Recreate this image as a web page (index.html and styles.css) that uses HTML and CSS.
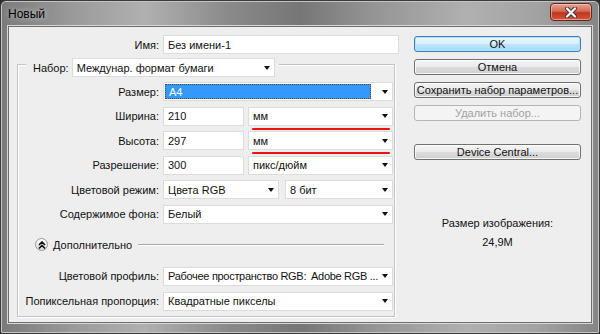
FILE: index.html
```html
<!DOCTYPE html>
<html lang="ru">
  <head>
    <meta charset="UTF-8" />
    <meta name="viewport" content="width=device-width, initial-scale=1.0" />
    <title>Новый</title>
    <link rel="stylesheet" href="styles.css">
  </head>
  <body>
    <main class="window">
      <header class="titlebar">
        <span class="title">Новый</span>
        <span class="close">
          <svg width="14" height="11" viewBox="0 0 14 11">
            <path d="M3 1.5 L11 9.5 M11 1.5 L3 9.5" stroke="#3a3a3a" stroke-width="4" stroke-linecap="round" />
            <path d="M3 1.5 L11 9.5 M11 1.5 L3 9.5" stroke="#fff" stroke-width="2.2" stroke-linecap="round" />
          </svg>
        </span>
      </header>

      <section class="client">
        <div class="form">
          <div class="row name-row">
            <span class="label outer">Имя:</span>
            <div class="field name">Без имени-1</div>
          </div>

          <div class="group">
            <div class="legend">
              <span class="legend-text">Набор:</span>
              <div class="select preset">Междунар. формат бумаги <i class="arrow"></i></div>
            </div>

            <div class="rows">
              <div class="row">
                <span class="label">Размер:</span>
                <div class="select full focus"><span class="hl">A4</span><i class="arrow"></i></div>
              </div>
              <div class="row">
                <span class="label">Ширина:</span>
                <div class="field num">210</div>
                <div class="select unit marked">мм <i class="arrow"></i></div>
              </div>
              <div class="row">
                <span class="label">Высота:</span>
                <div class="field num">297</div>
                <div class="select unit marked">мм <i class="arrow"></i></div>
              </div>
              <div class="row">
                <span class="label">Разрешение:</span>
                <div class="field num">300</div>
                <div class="select unit">пикс/дюйм <i class="arrow"></i></div>
              </div>
              <div class="row">
                <span class="label">Цветовой режим:</span>
                <div class="select mode">Цвета RGB <i class="arrow"></i></div>
                <div class="select bits">8 бит <i class="arrow"></i></div>
              </div>
              <div class="row">
                <span class="label">Содержимое фона:</span>
                <div class="select full">Белый <i class="arrow"></i></div>
              </div>
            </div>

            <div class="advanced">
              <span class="toggle">
                <svg width="8" height="8" viewBox="0 0 8 8">
                  <path d="M1 4 L4 1 L7 4 M1 7.5 L4 4.5 L7 7.5" fill="none" stroke="#111" stroke-width="1.6" />
                </svg>
              </span>
              <span class="advanced-text">Дополнительно</span>
              <span class="rule"></span>
            </div>

            <div class="rows">
              <div class="row">
                <span class="label">Цветовой профиль:</span>
                <div class="select full profile">Рабочее пространство RGB:&nbsp; Adobe RGB ... <i class="arrow"></i></div>
              </div>
              <div class="row">
                <span class="label">Попиксельная пропорция:</span>
                <div class="select full">Квадратные пикселы <i class="arrow"></i></div>
              </div>
            </div>
          </div>
        </div>

        <aside class="side">
          <button class="btn default">OK</button>
          <button class="btn">Отмена</button>
          <button class="btn">Сохранить набор параметров...</button>
          <button class="btn" disabled>Удалить набор...</button>
          <button class="btn central">Device Central...</button>
          <div class="size-info">
            <div>Размер изображения:</div>
            <div class="size-value">24,9M</div>
          </div>
        </aside>
      </section>
    </main>
  </body>
</html>
```

FILE: styles.css
```css
body {
  margin: 0;
  background-color: #2b2b2b;
  font-family: "Liberation Sans", Arial, sans-serif;
  font-size: 11px;
  color: #111;
}
.window {
  width: 600px;
  height: 334px;
  box-sizing: border-box;
  border: 1px solid #3a3a3a;
  border-radius: 6px 6px 2px 2px;
  background: linear-gradient(90deg, #7a7a7a 0%, #9a9a9a 12%, #b0b0b0 24%, #8a8a8a 38%, #767676 50%, #949494 62%, #b0b0b0 78%, #a2a2a2 90%, #858585 100%);
  box-shadow: inset 0 0 0 1px #c4c4c4;
  display: flex;
  flex-direction: column;
}
.titlebar {
  height: 25px;
  display: flex;
  justify-content: space-between;
  align-items: flex-start;
}
.title {
  margin: 6px 0 0 7px;
  font-size: 12px;
  color: #000;
  text-shadow: 0 0 6px rgba(255, 255, 255, 0.7);
}
.close {
  width: 40px;
  height: 16px;
  margin: 2px 7px 0 0;
  border: 1px solid #5a2a22;
  border-radius: 4px;
  background: linear-gradient(#e8a291 0%, #d46a52 45%, #c0351d 55%, #d6553a 100%);
  box-shadow: inset 0 0 0 1px rgba(255, 220, 210, 0.5);
  display: flex;
  justify-content: center;
  align-items: center;
}
.client {
  height: 297px;
  margin: 0 7px;
  box-sizing: border-box;
  border: 1px solid #6e6e6e;
  background-color: #eeeeee;
  box-shadow: 0 0 0 1px #d8d8d8;
  display: flex;
}
.form {
  width: 391px;
  padding-top: 8px;
}
.row {
  display: flex;
  align-items: center;
  height: 19px;
}
.label {
  width: 141px;
  margin-right: 4px;
  text-align: right;
  white-space: nowrap;
}
.label.outer {
  width: 150px;
}
.field,
.select {
  height: 19px;
  box-sizing: border-box;
  border: 1px solid #dcdcdc;
  background-color: #fff;
  display: flex;
  align-items: center;
  padding-left: 4px;
  white-space: nowrap;
  flex-shrink: 0;
}
.field.name {
  width: 236px;
}
.field.num {
  width: 81px;
  margin-right: 4px;
}
.select.full {
  width: 230px;
}
.select.profile {
  letter-spacing: -0.3px;
}
.select.unit {
  width: 145px;
  position: relative;
}
.select.mode {
  width: 116px;
  margin-right: 6px;
}
.select.bits {
  width: 108px;
}
.select.preset {
  width: 203px;
}
.arrow {
  margin-left: auto;
  margin-right: 4px;
  border-left: 3.5px solid transparent;
  border-right: 3.5px solid transparent;
  border-top: 4px solid #111;
}
.select.focus {
  padding: 1px;
}
.hl {
  flex: 1;
  align-self: stretch;
  margin-right: 11px;
  padding-left: 4px;
  background-color: #3399ff;
  outline: 1px dotted #5a4a2a;
  outline-offset: -1px;
  color: #fff;
  display: flex;
  align-items: center;
}
.hl + .arrow {
  margin-left: 0;
  margin-right: 3px;
}
.marked::after {
  content: "";
  position: absolute;
  left: 3px;
  right: 2px;
  bottom: -5px;
  height: 2px;
  border-radius: 1px;
  background-color: #f01010;
}
.group {
  width: 376px;
  height: 251px;
  margin: 10px 0 0 8px;
  border: 1px solid #c4c4c4;
  box-shadow: 1px 1px 0 #fff, inset 1px 1px 0 #fff;
}
.legend {
  display: flex;
  align-items: center;
  gap: 3px;
  width: max-content;
  height: 19px;
  margin: -7px 0 0 8px;
  padding: 0 4px 0 7px;
  background-color: #eeeeee;
}
.rows {
  display: flex;
  flex-direction: column;
  gap: 5.6px;
}
.legend + .rows {
  margin-top: 5px;
}
.advanced {
  display: flex;
  align-items: center;
  height: 16px;
  margin: 13px 10px 14px 17px;
}
.toggle {
  width: 11px;
  height: 11px;
  border: 1px solid #9a9a9a;
  border-radius: 50%;
  background: linear-gradient(#fdfdfd, #dedede);
  display: flex;
  justify-content: center;
  align-items: center;
}
.advanced-text {
  margin-left: 5px;
}
.rule {
  flex: 1;
  margin-left: 6px;
  border-top: 1px solid #a8a8a8;
  border-bottom: 1px solid #fff;
}
.side {
  width: 167px;
  margin-left: 14px;
  padding-top: 9px;
  display: flex;
  flex-direction: column;
}
.btn {
  height: 16px;
  margin-bottom: 7px;
  padding: 0;
  border: 1px solid #707070;
  border-radius: 3px;
  background: linear-gradient(#f4f4f4 0%, #ebebeb 48%, #dddddd 52%, #cfcfcf 100%);
  box-shadow: inset 0 0 0 1px rgba(255, 255, 255, 0.8);
  font-family: inherit;
  font-size: 11px;
  color: #111;
  line-height: 13px;
  white-space: nowrap;
}
.btn.default {
  border-color: #3c7fb1;
  background: linear-gradient(#e8f6fd 0%, #d9f0fc 48%, #bee6fd 52%, #a7d9f5 100%);
  box-shadow: inset 0 0 0 1px #b0e4fb;
}
.btn:disabled {
  border-color: #b5b5b5;
  background: #f4f4f4;
  color: #a3a3a3;
  box-shadow: none;
}
.btn.central {
  margin-top: 16px;
}
.size-info {
  margin-top: 47px;
  text-align: center;
  line-height: 19px;
}
```
